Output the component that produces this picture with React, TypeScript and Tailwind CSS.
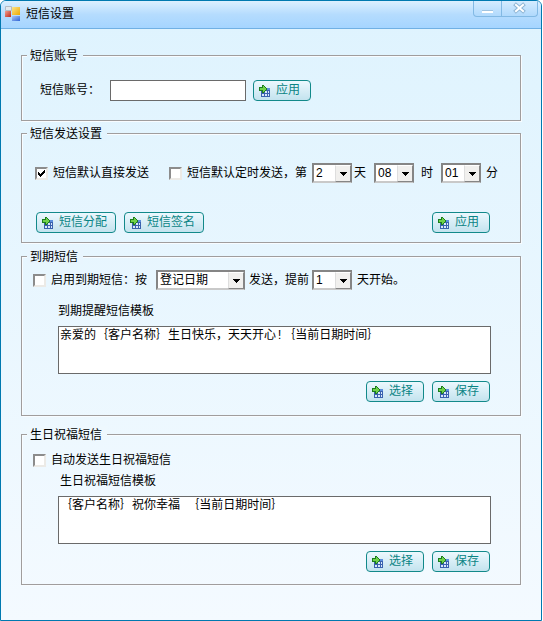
import React from "react";

const GridIcon = () => (
  <svg width={12} height={12} viewBox="0 0 12 12" shapeRendering="crispEdges" aria-hidden="true">
    <path d="M2 3h9v9H2z" fill="#3a62ae" />
    <path d="M7 3h4v2H7z" fill="#5c8fdc" />
    <path d="M3 7h2v1H3zM6 6h2v2H6zM9 6h1v2H9zM3 9h2v2H3zM6 9h2v2H6zM9 9h1v2H9z" fill="#d9e8fb" />
    <path d="M2 2h1V0h2v1h1v1h1v1h1v2H7v1H6v1H5v1H3V6H0V2z" fill="#1c7d1c" />
    <path d="M1 3h3V1h1v1h1v1h1v2H6v1H5v1H4V5H1z" fill="#6fd14a" />
  </svg>
);

const LogoIcon = () => (
  <svg width={16} height={15} viewBox="0 0 16 15" aria-hidden="true">
    <defs>
      <linearGradient id="red" x1="0" y1="0" x2="1" y2="1">
        <stop offset="0" stopColor="#f0a090" />
        <stop offset="1" stopColor="#c02818" />
      </linearGradient>
      <linearGradient id="yellow" x1="0" y1="0" x2="1" y2="1">
        <stop offset="0" stopColor="#fbe48a" />
        <stop offset="1" stopColor="#eea800" />
      </linearGradient>
      <linearGradient id="blue" x1="0" y1="0" x2="1" y2="1">
        <stop offset="0" stopColor="#a9c4f5" />
        <stop offset="1" stopColor="#2f66d8" />
      </linearGradient>
    </defs>
    <path d="M0.500 0.500h6v4h-6z" fill="#e4e8ec" stroke="#b4bcc4" />
    <path d="M0 5h6v6H0z" fill="url(#red)" />
    <path d="M7 1h8v8H7z" fill="url(#yellow)" />
    <path d="M7 10h8v5H7z" fill="url(#blue)" />
  </svg>
);

type GroupProps = {
  title: string;
  legendClass: string;
  className: string;
  children: React.ReactNode;
};

const Group = ({ title, legendClass, className, children }: GroupProps) => (
  <fieldset
    className={`min-w-0 border border-[#a09d9d] shadow-[inset_1px_1px_0_#f8fcff,1px_1px_0_#f8fcff] ${className}`}
  >
    <legend className={`ml-[5px] pt-px pl-[3px] pr-[5px] h-4 ${legendClass}`}>{title}</legend>
    {children}
  </fieldset>
);

const ActionButton = ({ children }: { children: React.ReactNode }) => (
  <button
    type="button"
    className="flex items-center gap-[5px] h-[21px] min-w-[58px] pl-[5px] pr-2 rounded border border-[#12898a] bg-linear-to-b from-[#ecf8fe] to-[#c3e3ee] text-[#0a8484] hover:to-[#aed8e8]"
  >
    <GridIcon />
    <span className="pb-0.5">{children}</span>
  </button>
);

type CheckProps = { label: string; defaultChecked?: boolean; className?: string };

const Check = ({ label, defaultChecked, className = "" }: CheckProps) => (
  <label className={`flex items-center gap-[5px] ${className}`}>
    <span className="relative flex">
      <input
        type="checkbox"
        defaultChecked={defaultChecked}
        className="peer appearance-none size-[13px] bg-white border-2 border-t-[#8c8c8c] border-l-[#8c8c8c] border-b-[#eceae6] border-r-[#eceae6]"
      />
      <svg
        viewBox="0 0 13 13"
        className="absolute inset-0 size-[13px] hidden peer-checked:block pointer-events-none"
        shapeRendering="crispEdges"
      >
        <path d="M3 5h1v1h1v1h1V6h1V5h1V4h1V3h1v3H9v1H8v1H7v1H6v1H5V9H4V8H3z" fill="#000" />
      </svg>
    </span>
    {label}
  </label>
);

type PickerProps = { label: string; options: string[]; className: string };

const Picker = ({ label, options, className }: PickerProps) => (
  <span className={`relative flex shrink-0 ${className}`}>
    <select
      aria-label={label}
      className="appearance-none w-full h-5 pl-[2px] bg-white text-black border-2 border-t-[#858585] border-l-[#858585] border-b-[#c9c9c9] border-r-[#858585]"
    >
      {options.map((o) => (
        <option key={o}>{o}</option>
      ))}
    </select>
    <span className="absolute right-[1px] top-[2px] bottom-[1px] w-4 flex items-center justify-center bg-[#f1f0ee] border border-t-white border-l-[#dedede] border-r-[#858585] border-b-[#858585] pointer-events-none">
      <svg width={7} height={4} viewBox="0 0 7 4" shapeRendering="crispEdges">
        <path d="M0 0h7v1H6v1H5v1H4v1H3V3H2V2H1V1H0z" fill="#000" />
      </svg>
    </span>
  </span>
);

type TemplateProps = { id: string; label: string; labelClass: string; value: string };

const Template = ({ id, label, labelClass, value }: TemplateProps) => (
  <div className="flex flex-col pl-9 pr-[29px]">
    <label htmlFor={id} className={labelClass}>
      {label}
    </label>
    <textarea
      id={id}
      defaultValue={value}
      className="mt-[7px] h-12 w-full pt-px px-px resize-none outline-none bg-white border border-[#6a6a6a] font-['Liberation_Mono','Noto_Sans_CJK_SC',monospace]"
    />
    <div className="mt-[7px] flex justify-end gap-2 pr-px">
      <ActionButton>选择</ActionButton>
      <ActionButton>保存</ActionButton>
    </div>
  </div>
);

const App = () => {
  return (
    <div className="min-h-screen flex flex-col overflow-hidden mr-px rounded-t-md border border-[#0079b0] bg-linear-to-b from-[#def3fe] to-[#f4faff] text-xs leading-4 text-black font-['Liberation_Sans','Noto_Sans_CJK_SC',sans-serif]">
      <header className="flex items-start justify-between h-7 pl-1 pr-[3px] border-b border-[#70b0e4] bg-linear-to-b from-[#dcf0ff] via-[#b5dcfe] to-[#a5d5ff]">
        <h1 className="flex items-center gap-[5px] h-[25px]">
          <LogoIcon />
          <span className="pt-px">短信设置</span>
        </h1>
        <div className="flex h-4 rounded-b border border-t-0 border-[#82b9e4] bg-linear-to-b from-[#d5ecff] to-[#b0d9fc]">
          <button type="button" aria-label="最小化" className="flex justify-center w-7 border-r border-[#82b9e4]">
            <svg width={13} height={14} viewBox="0 0 13 14" shapeRendering="crispEdges">
              <path d="M1 9h11v3H1z" fill="#9fc3e0" />
              <path d="M1 10h11v2H1z" fill="#fff" />
            </svg>
          </button>
          <button type="button" aria-label="关闭" className="flex justify-center w-[35px]">
            <svg width={13} height={14} viewBox="0 0 13 14">
              <path d="M3 4l7 6M10 4l-7 6" stroke="#8fb6d6" strokeWidth="4" strokeLinecap="square" />
              <path d="M3 4l7 6M10 4l-7 6" stroke="#fff" strokeWidth="2" strokeLinecap="square" />
            </svg>
          </button>
        </div>
      </header>

      <main className="flex flex-col pt-[18px] pl-5 pr-5 pb-5">
        <Group title="短信账号" legendClass="bg-[#e0f3fe]" className="pt-[17px] pb-[19px]">
          <div className="flex items-center pl-[18px]">
            <label htmlFor="account" className="w-[70px] pb-0.5">
              短信账号：
            </label>
            <input
              id="account"
              type="text"
              className="w-[136px] h-[21px] px-1 outline-none bg-white border border-[#6a6a6a] mr-[7px]"
            />
            <ActionButton>应用</ActionButton>
          </div>
        </Group>

        <Group title="短信发送设置" legendClass="bg-[#e2f4fe]" className="mt-1 pt-[22px] pb-[9px]">
          <div className="flex items-center pl-[13px] whitespace-nowrap">
            <Check label="短信默认直接发送" defaultChecked />
            <Check label="短信默认定时发送，第" className="ml-5" />
            <Picker label="天" options={["2", "1", "3"]} className="w-10 ml-[5px] mr-[2px]" />
            天
            <Picker label="时" options={["08", "09", "10"]} className="w-10 ml-2 mr-[7px]" />
            时
            <Picker label="分" options={["01", "02", "03"]} className="w-10 ml-2 mr-[5px]" />
            分
          </div>
          <div className="mt-[29px] flex gap-2 pl-[14px] pr-[30px]">
            <ActionButton>短信分配</ActionButton>
            <ActionButton>短信签名</ActionButton>
            <div className="ml-auto">
              <ActionButton>应用</ActionButton>
            </div>
          </div>
        </Group>

        <Group title="到期短信" legendClass="bg-[#e8f5fe]" className="mt-[5px] pt-[6px] pb-[13px]">
          <div className="flex items-center pl-[11px] mb-[13px] whitespace-nowrap">
            <Check label="启用到期短信：按" />
            <Picker label="日期类型" options={["登记日期", "到期日期"]} className="w-[89px] ml-[9px] mr-1" />
            发送，提前
            <Picker label="提前天数" options={["1", "2", "3"]} className="w-10 ml-[3px] mr-[5px]" />
            天开始。
          </div>
          <Template
            id="expire"
            label="到期提醒短信模板"
            labelClass=""
            value="亲爱的｛客户名称｝生日快乐，天天开心!｛当前日期时间｝"
          />
        </Group>

        <Group title="生日祝福短信" legendClass="bg-[#eef8fe]" className="mt-[10px] pt-[10px] pb-3">
          <div className="flex pl-[11px] mb-[5px]">
            <Check label="自动发送生日祝福短信" />
          </div>
          <Template
            id="birthday"
            label="生日祝福短信模板"
            labelClass="pl-[2px]"
            value="｛客户名称｝祝你幸福 ｛当前日期时间｝"
          />
        </Group>
      </main>
    </div>
  );
};

export default App;
